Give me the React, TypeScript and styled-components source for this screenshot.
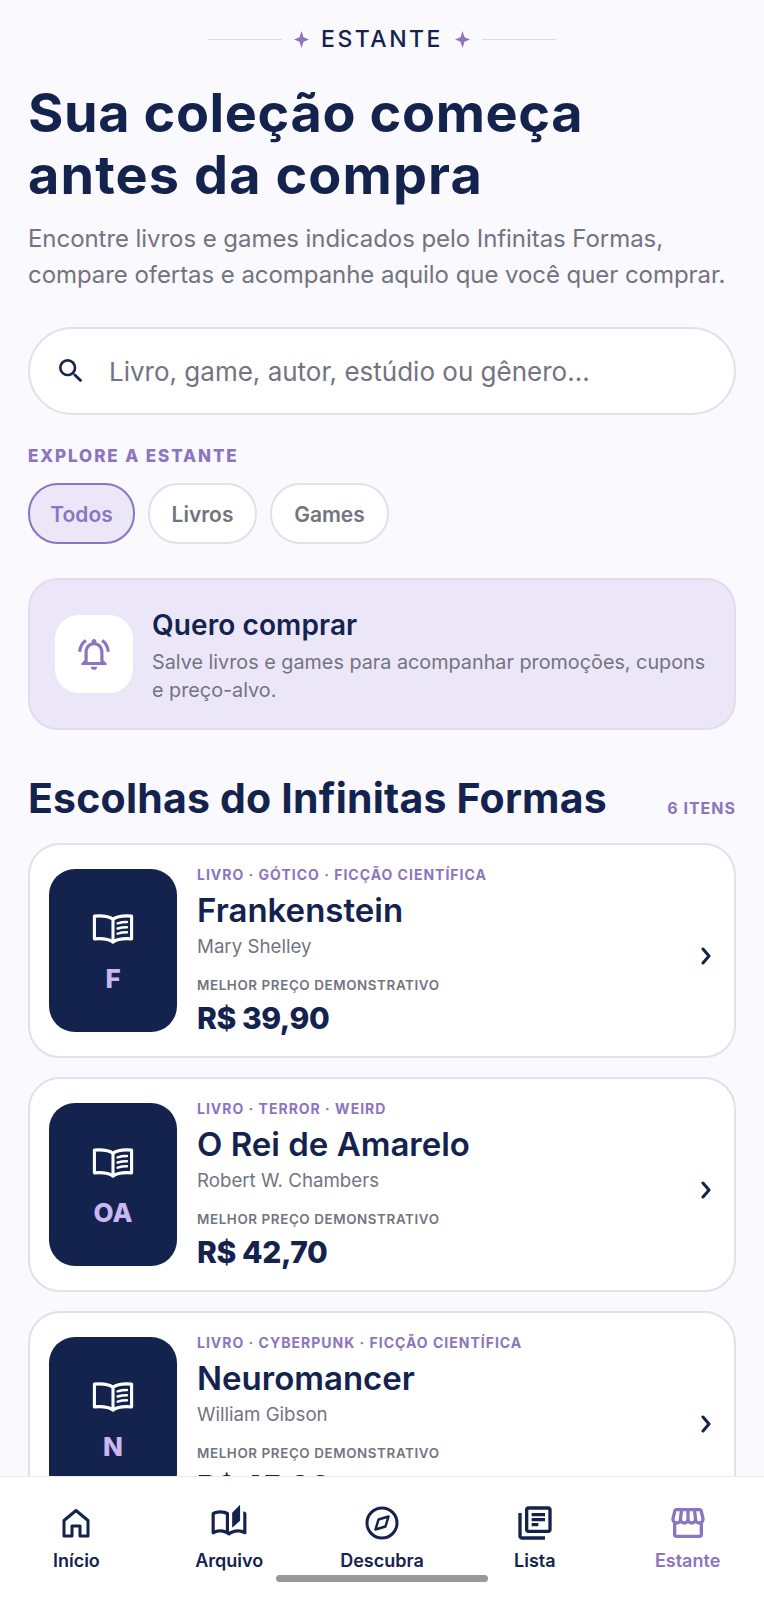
import React from "react";
import styled, { createGlobalStyle } from "styled-components";
import {
  MdOutlineAutoStories,
  MdOutlineLibraryBooks,
  MdOutlineNotificationsActive,
  MdOutlineStorefront,
  MdSearch,
} from "react-icons/md";

const navy = "#14234e";
const purple = "#8c74c0";
const gray = "#73747f";
const line = "#e2e1ea";

const GlobalStyle = createGlobalStyle`
  html, body {
    margin: 0;
    padding: 0;
    background: #f9f9fe;
    font-family: Inter, "Noto Sans", sans-serif;
  }
  * { box-sizing: border-box; }
`;

const Page = styled.div`
  height: 1600px;
  overflow: hidden;
  padding: 25px 28px 0;
  background: #f9f9fe;
`;

const Kicker = styled.div`
  display: flex;
  align-items: center;
  justify-content: center;
  height: 28px;
  gap: 12px;
  color: ${navy};
  font-size: 23px;
  font-weight: 550;
  letter-spacing: 2.5px;
`;

const KickerLine = styled.span`
  width: 74px;
  height: 1px;
  background: #dcdbe6;
`;

const Heading = styled.h1`
  margin: 29px 0 0;
  color: ${navy};
  font-size: 54px;
  line-height: 62px;
  font-weight: 700;
`;

const HeadingLine = styled.span<{ $spacing: number }>`
  display: block;
  letter-spacing: ${(p) => p.$spacing}px;
`;

const Intro = styled.p`
  margin: 15px 0 0;
  color: ${gray};
  font-size: 24px;
  line-height: 36px;
  letter-spacing: -0.06px;
  white-space: nowrap;
`;

const SearchBox = styled.div`
  display: flex;
  align-items: center;
  gap: 22px;
  height: 88px;
  margin-top: 34px;
  padding-left: 25px;
  background: #fff;
  border: 2px solid ${line};
  border-radius: 44px;
  color: ${gray};
  font-size: 26px;
  svg { color: ${navy}; }
`;

const SectionLabel = styled.div`
  margin-top: 31px;
  color: ${purple};
  font-size: 17px;
  line-height: 20px;
  font-weight: 800;
  letter-spacing: 1.9px;
`;

const Chips = styled.div`
  display: flex;
  gap: 13px;
  margin-top: 17px;
`;

const Chip = styled.div<{ $active?: boolean; $width: number }>`
  display: flex;
  align-items: center;
  justify-content: center;
  height: 61px;
  width: ${(p) => p.$width}px;
  padding-top: 2px;
  border: 2px solid ${(p) => (p.$active ? purple : line)};
  border-radius: 30px;
  background: ${(p) => (p.$active ? "#ece7f8" : "#fff")};
  color: ${(p) => (p.$active ? purple : gray)};
  font-size: 21px;
  font-weight: 600;
`;

const Banner = styled.div`
  display: flex;
  align-items: center;
  gap: 19px;
  height: 152px;
  margin-top: 34px;
  padding: 0 25px;
  background: #ece7f8;
  border: 2px solid #e1dcee;
  border-radius: 30px;
`;

const BannerIcon = styled.div`
  display: flex;
  align-items: center;
  justify-content: center;
  flex: none;
  width: 78px;
  height: 78px;
  background: #fff;
  border-radius: 24px;
  color: ${purple};
`;

const BannerCopy = styled.div`
  padding-top: 4px;
`;

const BannerTitle = styled.div`
  color: ${navy};
  font-size: 28px;
  line-height: 32px;
  font-weight: 600;
  letter-spacing: 0.1px;
`;

const BannerText = styled.div`
  margin-top: 7px;
  color: ${gray};
  font-size: 19.8px;
  line-height: 28px;
  white-space: nowrap;
`;

const SectionHead = styled.div`
  display: flex;
  align-items: flex-end;
  justify-content: space-between;
  margin-top: 43px;
`;

const SectionTitle = styled.h2`
  margin: 0;
  color: ${navy};
  font-size: 41px;
  line-height: 50px;
  font-weight: 700;
  letter-spacing: 0.2px;
`;

const Count = styled.div`
  margin-bottom: 5px;
  color: ${purple};
  font-size: 16px;
  line-height: 20px;
  font-weight: 700;
  letter-spacing: 1px;
`;

const Card = styled.div`
  display: flex;
  align-items: center;
  height: 215px;
  margin-top: 19px;
  padding: 0 19px;
  background: #fff;
  border: 2px solid ${line};
  border-radius: 32px;
`;

const CardList = styled.div`
  margin-top: 20px;
  ${Card}:first-child { margin-top: 0; }
`;

const Cover = styled.div`
  display: flex;
  flex-direction: column;
  align-items: center;
  justify-content: center;
  flex: none;
  gap: 19px;
  width: 128px;
  height: 163px;
  padding-top: 6px;
  background: ${navy};
  border-radius: 26px;
  color: #fff;
`;

const CoverLetter = styled.div`
  color: #c9b8f0;
  font-size: 26px;
  line-height: 32px;
  font-weight: 800;
`;

const CardBody = styled.div`
  flex: 1;
  margin-left: 20px;
  padding-top: 3px;
`;

const Genre = styled.div`
  color: ${purple};
  font-size: 14px;
  line-height: 18px;
  font-weight: 700;
  letter-spacing: 1px;
`;

const Title = styled.div`
  margin-top: 6px;
  color: ${navy};
  font-size: 33px;
  line-height: 40px;
  font-weight: 600;
`;

const Author = styled.div`
  margin-top: 3px;
  color: ${gray};
  font-size: 18.7px;
  line-height: 28px;
`;

const PriceLabel = styled.div`
  margin-top: 15px;
  color: ${gray};
  font-size: 13.4px;
  line-height: 18px;
  font-weight: 600;
  letter-spacing: 0.6px;
`;

const Price = styled.div`
  margin-top: 4px;
  color: ${navy};
  font-size: 30px;
  line-height: 40px;
  font-weight: 800;
  letter-spacing: -0.4px;
`;

const Chevron = styled.svg`
  flex: none;
  margin: 10px 3px 0 0;
`;

const Nav = styled.nav`
  position: fixed;
  left: 0;
  right: 0;
  bottom: 0;
  display: grid;
  grid-template-columns: repeat(5, 1fr);
  height: 124px;
  padding-top: 26px;
  background: #fff;
  border-top: 1px solid #ecebf1;
`;

const NavItem = styled.div<{ $active?: boolean }>`
  display: flex;
  flex-direction: column;
  align-items: center;
  color: ${(p) => (p.$active ? purple : navy)};
  font-size: 18px;
  line-height: 24px;
  font-weight: 600;
`;

const NavIcon = styled.div`
  display: flex;
  align-items: center;
  justify-content: center;
  height: 40px;
  margin-bottom: 6px;
`;

const HomeBar = styled.div`
  position: fixed;
  left: 276px;
  bottom: 18px;
  width: 212px;
  height: 7px;
  border-radius: 4px;
  background: #999;
`;

function Sparkle() {
  return (
    <svg width="15" height="17" viewBox="0 0 15 17" fill={purple}>
      <path d="M7.5 0 9.5 6.3 15 8.5 9.5 10.7 7.5 17 5.5 10.7 0 8.5 5.5 6.3Z" />
    </svg>
  );
}

function HomeIcon() {
  return (
    <svg width="34" height="34" viewBox="0 0 34 34" fill="none" stroke="currentColor" strokeWidth="3" strokeLinejoin="round">
      <path d="M5 14.5 17 4.5l12 10V30h-8V20h-8v10H5Z" />
    </svg>
  );
}

function CompassIcon() {
  return (
    <svg width="34" height="34" viewBox="0 0 34 34" fill="none" stroke="currentColor" strokeLinejoin="round">
      <circle cx="17" cy="17" r="15" strokeWidth="3" />
      <path d="M23.5 10.5 20.5 20.5 10.5 23.5 13.5 13.5Z" strokeWidth="2.5" />
    </svg>
  );
}

function BookIcon() {
  return (
    <svg width="42" height="31" viewBox="0 0 40 30" fill="none" stroke="currentColor" strokeWidth="3" strokeLinejoin="round" strokeLinecap="round">
      <path d="M20 6C16 3 9 2.500 2 3v22c7-.5 14 0 18 3 4-3 11-3.500 18-3V3c-7-.5-14 0-18 3Z" />
      <path d="M20 6v22" />
      <path strokeWidth="2.400" d="M24.500 10c3-1 6-1.300 9-1.300M24.500 15c3-1 6-1.300 9-1.300M24.500 20c3-1 6-1.300 9-1.300" />
    </svg>
  );
}

const items = [
  { genre: "LIVRO · GÓTICO · FICÇÃO CIENTÍFICA", title: "Frankenstein", author: "Mary Shelley", price: "R$ 39,90", letter: "F" },
  { genre: "LIVRO · TERROR · WEIRD", title: "O Rei de Amarelo", author: "Robert W. Chambers", price: "R$ 42,70", letter: "OA" },
  { genre: "LIVRO · CYBERPUNK · FICÇÃO CIENTÍFICA", title: "Neuromancer", author: "William Gibson", price: "R$ 45,90", letter: "N" },
];

export default function App() {
  return (
    <>
      <GlobalStyle />
      <Page>
        <Kicker>
          <KickerLine />
          <Sparkle />
          ESTANTE
          <Sparkle />
          <KickerLine />
        </Kicker>
        <Heading>
          <HeadingLine $spacing={0.6}>Sua coleção começa</HeadingLine>
          <HeadingLine $spacing={1.1}>antes da compra</HeadingLine>
        </Heading>
        <Intro>
          Encontre livros e games indicados pelo Infinitas Formas,
          <br />
          compare ofertas e acompanhe aquilo que você quer comprar.
        </Intro>
        <SearchBox>
          <MdSearch size={32} />
          Livro, game, autor, estúdio ou gênero...
        </SearchBox>
        <SectionLabel>EXPLORE A ESTANTE</SectionLabel>
        <Chips>
          <Chip $active $width={107}>Todos</Chip>
          <Chip $width={109}>Livros</Chip>
          <Chip $width={119}>Games</Chip>
        </Chips>
        <Banner>
          <BannerIcon>
            <MdOutlineNotificationsActive size={38} />
          </BannerIcon>
          <BannerCopy>
            <BannerTitle>Quero comprar</BannerTitle>
            <BannerText>
              Salve livros e games para acompanhar promoções, cupons
              <br />
              e preço-alvo.
            </BannerText>
          </BannerCopy>
        </Banner>
        <SectionHead>
          <SectionTitle>Escolhas do Infinitas Formas</SectionTitle>
          <Count>6 ITENS</Count>
        </SectionHead>
        <CardList>
          {items.map((item) => (
            <Card key={item.title}>
              <Cover>
                <BookIcon />
                <CoverLetter>{item.letter}</CoverLetter>
              </Cover>
              <CardBody>
                <Genre>{item.genre}</Genre>
                <Title>{item.title}</Title>
                <Author>{item.author}</Author>
                <PriceLabel>MELHOR PREÇO DEMONSTRATIVO</PriceLabel>
                <Price>{item.price}</Price>
              </CardBody>
              <Chevron width="11" height="18" viewBox="0 0 11 18" fill="none" stroke={navy} strokeWidth="3" strokeLinecap="round" strokeLinejoin="round">
                <path d="M2 2l6 7-6 7" />
              </Chevron>
            </Card>
          ))}
        </CardList>
      </Page>
      <Nav>
        <NavItem>
          <NavIcon><HomeIcon /></NavIcon>
          Início
        </NavItem>
        <NavItem>
          <NavIcon><MdOutlineAutoStories size={38} /></NavIcon>
          Arquivo
        </NavItem>
        <NavItem>
          <NavIcon><CompassIcon /></NavIcon>
          Descubra
        </NavItem>
        <NavItem>
          <NavIcon><MdOutlineLibraryBooks size={40} /></NavIcon>
          Lista
        </NavItem>
        <NavItem $active>
          <NavIcon><MdOutlineStorefront size={40} /></NavIcon>
          Estante
        </NavItem>
      </Nav>
      <HomeBar />
    </>
  );
}
